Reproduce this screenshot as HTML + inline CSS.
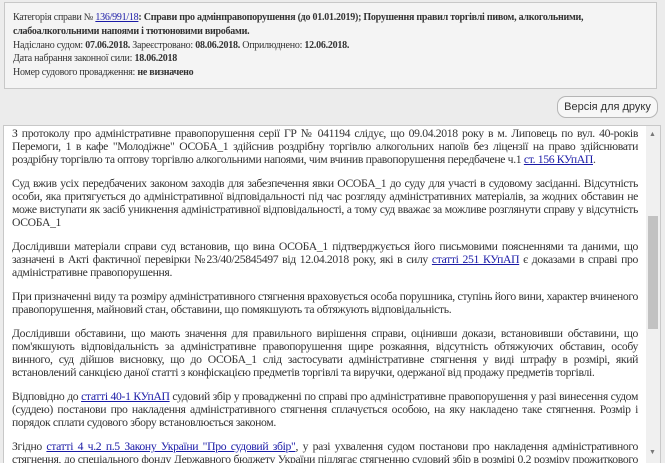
<!DOCTYPE html>
<html><head><meta charset="utf-8"><style>
body{margin:0;width:665px;height:462px;overflow:hidden;background:#ececec;font-family:"Liberation Serif",serif;}
.hdr{position:absolute;left:4px;top:2px;width:651px;height:85px;border:1px solid #c8c8c8;background:#f4f4f4;color:#333;font-size:10px;letter-spacing:-0.25px;line-height:13.8px;}
.hdr .in{padding:8px 0 0 8px;width:600px;}
a{color:#1a1aa6;text-decoration:underline;}
.btn{position:absolute;left:557px;top:96px;width:99px;height:20px;border:1px solid #b5b5b5;border-radius:9px;background:#f7f7f7;font-family:"Liberation Sans",sans-serif;font-size:11px;color:#333;text-align:center;line-height:20px;}
.box{position:absolute;left:3px;top:125px;width:656px;height:337px;border:1px solid #c8c8c8;border-bottom:none;background:#fff;overflow:hidden;}
.txt{position:absolute;left:8px;top:1px;width:626px;font-size:11.7px;letter-spacing:-0.35px;line-height:13px;color:#333;text-align:justify;}
.txt p{margin:0 0 11px 0;}
.sb{position:absolute;left:642px;top:0;width:14px;height:337px;background:#f0f0f0;}
.th{position:absolute;left:2px;top:90px;width:10px;height:113px;background:#c2c2c2;}
.ar{position:absolute;left:3px;font-size:7px;color:#777;}
</style></head><body>
<div class="hdr"><div class="in">
Категорія справи № <a>136/991/18</a><b>: Справи про адмінправопорушення (до 01.01.2019); Порушення правил торгівлі пивом, алкогольними, слабоалкогольними напоями і тютюновими виробами.</b><br>
Надіслано судом: <b>07.06.2018.</b> Зареєстровано: <b>08.06.2018.</b> Оприлюднено: <b>12.06.2018.</b><br>
Дата набрання законної сили: <b>18.06.2018</b><br>
Номер судового провадження: <b>не визначено</b>
</div></div>
<div class="btn">Версія для друку</div>
<div class="box">
<div class="txt">
<p>З протоколу про адміністративне правопорушення серії ГР № 041194 слідує, що 09.04.2018 року в м. Липовець по вул. 40-років Перемоги, 1 в кафе "Молодіжне" ОСОБА_1 здійснив роздрібну торгівлю алкогольних напоїв без ліцензії на право здійснювати роздрібну торгівлю та оптову торгівлю алкогольними напоями, чим вчинив правопорушення передбачене ч.1 <a>ст. 156 КУпАП</a>.</p>
<p>Суд вжив усіх передбачених законом заходів для забезпечення явки ОСОБА_1 до суду для участі в судовому засіданні. Відсутність особи, яка притягується до адміністративної відповідальності під час розгляду адміністративних матеріалів, за жодних обставин не може виступати як засіб уникнення адміністративної відповідальності, а тому суд вважає за можливе розглянути справу у відсутність ОСОБА_1</p>
<p>Дослідивши матеріали справи суд встановив, що вина ОСОБА_1 підтверджується його письмовими поясненнями та даними, що зазначені в Акті фактичної перевірки №23/40/25845497 від 12.04.2018 року, які в силу <a>статті 251 КУпАП</a> є доказами в справі про адміністративне правопорушення.</p>
<p>При призначенні виду та розміру адміністративного стягнення враховується особа порушника, ступінь його вини, характер вчиненого правопорушення, майновий стан, обставини, що помякшують та обтяжують відповідальність.</p>
<p>Дослідивши обставини, що мають значення для правильного вирішення справи, оцінивши докази, встановивши обставини, що пом'якшують відповідальність за адміністративне правопорушення щире розкаяння, відсутність обтяжуючих обставин, особу винного, суд дійшов висновку, що до ОСОБА_1 слід застосувати адміністративне стягнення у виді штрафу в розмірі, який встановлений санкцією даної статті з конфіскацією предметів торгівлі та виручки, одержаної від продажу предметів торгівлі.</p>
<p>Відповідно до <a>статті 40-1 КУпАП</a> судовий збір у провадженні по справі про адміністративне правопорушення у разі винесення судом (суддею) постанови про накладення адміністративного стягнення сплачується особою, на яку накладено таке стягнення. Розмір і порядок сплати судового збору встановлюється законом.</p>
<p>Згідно <a>статті 4 ч.2 п.5 Закону України "Про судовий збір"</a>, у разі ухвалення судом постанови про накладення адміністративного стягнення, до спеціального фонду Державного бюджету України підлягає стягненню судовий збір в розмірі 0,2 розміру прожиткового мінімуму.</p>
</div>
<div class="sb"><div class="ar" style="top:4px">▲</div><div class="th"></div><div class="ar" style="top:322px">▼</div></div>
</div>
</body></html>
